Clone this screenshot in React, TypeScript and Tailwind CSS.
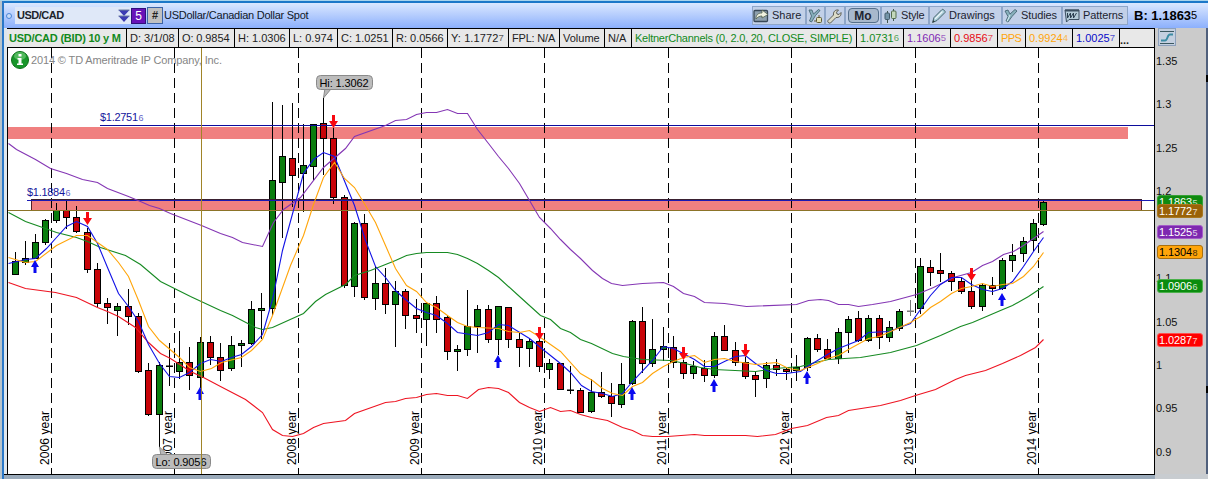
import type { ReactNode } from "react";

type Point = [number, number];
// kind, body top, body bottom, high, low
type Candle = ["g" | "r" | "d" | "n", number, number, number, number];

const candles: Candle[] = [
  ["g", 261, 274, 252, 275], ["g", 258, 262, 241, 265], ["g", 242, 258, 234, 259],
  ["g", 220, 242, 219, 245], ["g", 210, 220, 203, 223], ["r", 210, 217, 200, 229],
  ["r", 217, 231, 206, 233], ["r", 232, 269, 228, 273], ["r", 269, 303, 263, 307],
  ["r", 303, 307, 298, 324], ["g", 306, 310, 303, 336], ["r", 306, 316, 289, 325],
  ["r", 316, 371, 313, 373], ["r", 370, 414, 363, 416], ["g", 365, 414, 362, 447],
  ["d", 366, 366, 343, 386], ["g", 362, 371, 331, 379], ["r", 362, 375, 347, 390],
  ["g", 342, 377, 337, 388], ["r", 342, 357, 336, 365], ["r", 357, 370, 343, 381],
  ["g", 345, 368, 336, 371], ["g", 343, 345, 340, 367], ["g", 309, 343, 301, 345],
  ["g", 308, 310, 293, 339], ["g", 180, 308, 102, 315], ["g", 156, 182, 105, 238],
  ["r", 158, 175, 103, 207], ["g", 165, 173, 124, 212], ["g", 124, 166, 124, 180],
  ["r", 123, 138, 98, 175], ["r", 138, 197, 128, 204], ["r", 197, 285, 195, 288],
  ["g", 223, 286, 222, 297], ["r", 223, 297, 214, 300], ["g", 283, 298, 266, 310],
  ["r", 283, 304, 268, 314], ["g", 291, 304, 281, 347], ["r", 291, 315, 289, 329],
  ["r", 315, 318, 299, 333], ["g", 303, 319, 303, 346], ["r", 303, 319, 296, 333],
  ["r", 317, 351, 315, 360], ["g", 349, 351, 345, 371], ["g", 326, 349, 290, 356],
  ["g", 309, 326, 305, 353], ["r", 309, 339, 305, 343], ["g", 306, 339, 306, 355],
  ["r", 307, 339, 307, 348], ["r", 339, 347, 333, 367], ["g", 341, 348, 338, 367],
  ["r", 341, 366, 339, 372], ["g", 363, 369, 359, 379], ["r", 363, 389, 363, 390],
  ["d", 390, 390, 366, 394], ["r", 390, 412, 388, 413], ["g", 392, 411, 379, 413],
  ["r", 392, 396, 372, 398], ["r", 396, 403, 383, 417], ["g", 384, 404, 363, 408],
  ["g", 321, 383, 320, 385], ["r", 321, 363, 307, 373], ["g", 349, 363, 319, 367],
  ["g", 346, 349, 327, 361], ["r", 347, 362, 336, 368], ["r", 362, 373, 360, 379],
  ["g", 366, 373, 361, 379], ["r", 368, 375, 360, 382], ["g", 336, 375, 332, 378],
  ["r", 336, 350, 325, 351], ["r", 350, 362, 342, 366], ["r", 362, 376, 357, 379],
  ["r", 375, 379, 371, 397], ["g", 365, 378, 362, 388], ["r", 365, 369, 359, 376],
  ["r", 369, 371, 367, 380], ["g", 367, 370, 355, 381], ["g", 338, 367, 337, 371],
  ["r", 338, 349, 334, 352], ["r", 349, 358, 339, 359], ["g", 332, 358, 328, 364],
  ["g", 319, 332, 316, 353], ["r", 318, 340, 311, 342], ["g", 318, 340, 315, 342],
  ["r", 318, 337, 315, 349], ["g", 327, 337, 321, 342], ["g", 311, 328, 309, 331],
  ["n", 311, 311, 300, 316], ["g", 266, 308, 258, 314], ["r", 267, 272, 260, 286],
  ["r", 270, 273, 253, 282], ["r", 273, 281, 271, 291], ["r", 281, 291, 278, 294],
  ["r", 291, 306, 280, 309], ["g", 285, 306, 283, 311], ["r", 285, 288, 277, 295],
  ["g", 260, 288, 258, 290], ["g", 255, 260, 244, 272], ["g", 241, 253, 237, 262],
  ["g", 223, 240, 219, 251], ["g", 202, 224, 200, 226],
];

const upper: Point[] = [
  [8, 143], [16, 149], [35, 159], [50, 168], [66, 173], [82, 179], [97, 182], [107, 188],
  [128, 196], [140, 201], [149, 205], [159, 208], [170, 213], [201, 225], [220, 233],
  [232, 237], [242, 242], [262, 246], [273, 222], [283, 209], [300, 197], [323, 167],
  [345, 148], [354, 136], [385, 125], [395, 120], [406, 119], [416, 114], [426, 112],
  [436, 112], [447, 109], [457, 113], [467, 113], [477, 129], [488, 143], [498, 156],
  [508, 168], [519, 183], [529, 200], [539, 217], [550, 228], [560, 239], [570, 249],
  [580, 258], [592, 270], [602, 278], [611, 283], [622, 285], [642, 283], [663, 282],
  [673, 286], [683, 293], [694, 296], [704, 302], [724, 303], [746, 306], [796, 304],
  [808, 300], [820, 299], [828, 300], [838, 304], [848, 304], [858, 306], [872, 304],
  [890, 301], [916, 294], [933, 287], [953, 277], [971, 272], [982, 265], [992, 261],
  [1003, 254], [1013, 251], [1023, 245], [1043, 231],
];

const middle: Point[] = [
  [8, 212], [25, 221], [45, 228], [56, 232], [76, 237], [87, 241], [100, 247], [125, 255],
  [140, 264], [160, 281], [190, 296], [220, 310], [232, 315], [255, 327], [262, 329],
  [272, 327], [303, 313], [315, 301], [325, 294], [345, 284], [354, 275], [370, 270],
  [385, 264], [395, 260], [406, 255], [416, 253], [426, 252], [447, 252], [457, 254],
  [467, 258], [477, 263], [488, 270], [498, 277], [519, 296], [540, 315], [550, 319],
  [560, 328], [570, 332], [580, 339], [591, 343], [612, 353], [623, 356], [642, 359],
  [670, 360], [685, 363], [700, 367], [714, 369], [755, 371], [775, 368], [800, 366],
  [815, 362], [828, 359], [860, 357], [890, 352], [916, 345], [940, 335], [960, 326],
  [972, 322], [1000, 310], [1012, 305], [1028, 296], [1043, 286],
];

const lower: Point[] = [
  [8, 282], [25, 288], [55, 292], [76, 297], [97, 307], [107, 311], [118, 316], [135, 327],
  [148, 342], [160, 353], [170, 358], [190, 371], [203, 377], [220, 386], [245, 399],
  [262, 412], [272, 429], [282, 435], [292, 436], [303, 433], [313, 427], [323, 423],
  [345, 420], [354, 413], [385, 402], [395, 401], [405, 398], [416, 397], [426, 394],
  [436, 393], [447, 395], [457, 395], [467, 398], [478, 389], [488, 387], [498, 388],
  [508, 392], [519, 402], [529, 407], [539, 411], [550, 407], [560, 411], [570, 410],
  [580, 414], [591, 417], [607, 420], [622, 427], [632, 430], [642, 435], [652, 436],
  [667, 436], [694, 434], [704, 435], [745, 435], [757, 436], [775, 434], [791, 428],
  [807, 425], [826, 417], [838, 415], [848, 410], [880, 405], [900, 400], [915, 395],
  [935, 389], [955, 379], [965, 375], [985, 370], [1002, 363], [1020, 355], [1035, 347],
  [1043, 339],
];

const fast: Point[] = [
  [8, 263], [25, 259], [35, 258], [46, 248], [56, 237], [66, 226], [76, 221], [87, 226],
  [97, 243], [107, 267], [118, 293], [128, 306], [138, 321], [148, 344], [159, 363],
  [169, 376], [179, 377], [189, 372], [200, 363], [210, 359], [221, 361], [231, 357],
  [241, 354], [251, 346], [262, 334], [272, 299], [282, 250], [303, 173], [313, 159],
  [323, 152], [334, 156], [354, 205], [365, 240], [375, 266], [385, 277], [395, 290],
  [405, 299], [416, 308], [426, 312], [436, 315], [447, 323], [457, 332], [477, 335],
  [488, 332], [498, 324], [508, 325], [529, 338], [545, 351], [560, 363], [570, 372],
  [581, 385], [591, 391], [602, 393], [612, 396], [622, 393], [632, 381], [652, 360],
  [663, 346], [673, 348], [694, 359], [704, 366], [714, 366], [724, 361], [735, 356],
  [745, 355], [755, 363], [766, 370], [776, 373], [786, 373], [800, 371], [807, 366],
  [817, 360], [827, 354], [838, 348], [858, 340], [868, 332], [889, 331], [899, 327],
  [910, 323], [920, 309], [930, 295], [940, 284], [951, 277], [961, 277], [971, 284],
  [982, 289], [992, 291], [1002, 288], [1012, 281], [1023, 266], [1033, 251], [1043, 237],
];

const slow: Point[] = [
  [8, 257], [25, 262], [35, 261], [56, 245], [76, 235], [87, 235], [97, 242], [107, 249],
  [118, 262], [128, 276], [138, 300], [148, 326], [159, 340], [179, 357], [189, 367],
  [200, 371], [211, 368], [221, 362], [241, 357], [251, 350], [262, 339], [272, 315],
  [290, 265], [303, 235], [313, 204], [323, 177], [334, 162], [344, 178], [354, 187],
  [365, 205], [375, 222], [385, 245], [395, 268], [406, 285], [416, 291], [426, 302],
  [436, 307], [447, 315], [457, 322], [467, 326], [477, 327], [498, 328], [508, 331],
  [519, 332], [529, 330], [540, 337], [560, 351], [580, 373], [592, 380], [602, 388],
  [612, 393], [622, 395], [632, 386], [642, 382], [652, 373], [663, 366], [673, 361],
  [683, 357], [694, 355], [704, 362], [714, 359], [724, 358], [735, 361], [755, 364],
  [776, 362], [788, 368], [800, 370], [817, 363], [827, 358], [838, 355], [848, 349],
  [868, 338], [879, 336], [899, 327], [910, 322], [920, 316], [930, 307], [940, 301],
  [951, 293], [961, 288], [971, 286], [982, 283], [992, 286], [1002, 284], [1012, 283],
  [1023, 276], [1033, 266], [1043, 252],
];

const lines = [
  { pts: upper, color: "#8436b4" },
  { pts: middle, color: "#168a22" },
  { pts: lower, color: "#ee1422" },
  { pts: fast, color: "#1212e6" },
  { pts: slow, color: "#ffa50a" },
];

const years: [number, string][] = [
  [51, "2006 year"], [174, "2007 year"], [298, "2008 year"], [421, "2009 year"],
  [544, "2010 year"], [668, "2011 year"], [791, "2012 year"], [915, "2013 year"],
  [1038, "2014 year"],
];

const buys: Point[] = [[35, 260], [200, 387], [498, 355], [632, 387], [714, 379], [807, 371], [1002, 293]];
const sells: Point[] = [[87, 225], [333, 128], [539, 340], [683, 360], [745, 357], [971, 281]];

const ticks: [number, string][] = [
  [61, "1.35"], [104, "1.3"], [148, "1.25"], [191, "1.2"], [278, "1.1"],
  [322, "1.05"], [365, "1"], [408, "0.95"], [452, "0.9"],
];

const tags = [
  { y: 202, main: "1.1863", tail: "5", bg: "#0f8a10", edge: "#36a036", fg: "#ffffff" },
  { y: 211, main: "1.1772", tail: "7", bg: "#9a6208", edge: "#a87820", fg: "#ffffff" },
  { y: 232, main: "1.1525", tail: "5", bg: "#7e28b0", edge: "#a45cc8", fg: "#ffffff" },
  { y: 252, main: "1.1304", tail: "8", bg: "#ffa50a", edge: "#a87010", fg: "#000000" },
  { y: 286, main: "1.0906", tail: "6", bg: "#0a8c0e", edge: "#4ab04a", fg: "#ffffff" },
  { y: 340, main: "1.0287", tail: "7", bg: "#ff0000", edge: "#ff5050", fg: "#ffffff" },
];

const bodyFill = { g: "#0a7d0e", r: "#c80308", d: "#000", n: "#777" };

const candleX = (i: number) => Math.floor(15.09 + 10.2865 * i);
const toPoints = (pts: Point[]) => pts.map(([x, y]) => `${x + 0.5},${y + 0.5}`).join(" ");

function CandleShape({ c, i }: { c: Candle; i: number }) {
  const [kind, top, bottom, high, low] = c;
  const x = candleX(i);
  if (kind === "d" || kind === "n") {
    return (
      <g fill={bodyFill[kind]}>
        <rect x={x} y={high} width={1} height={low - high} />
        <rect x={x - 3} y={top - 0.5} width={7} height={1.5} />
      </g>
    );
  }
  return (
    <g>
      <rect x={x} y={high} width={1} height={low - high} fill="#000" />
      <rect
        x={x - 2.5}
        y={top + 0.5}
        width={6}
        height={bottom - top}
        fill={bodyFill[kind]}
        stroke="#000"
      />
    </g>
  );
}

function Callout({ x, y, w, text, tip }: { x: number; y: number; w: number; text: string; tip: string }) {
  return (
    <g>
      <path d={tip} fill="#b9b9b9" stroke="#8a8a8a" />
      <rect x={x + 0.5} y={y + 0.5} width={w} height={14} rx={4} fill="#bcbcbc" stroke="#8a8a8a" />
      <text x={x + 3.5} y={y + 12} fontSize={11} textLength={w - 7} fill="#000">
        {text}
      </text>
    </g>
  );
}

function Chart() {
  return (
    <svg
      viewBox="8 48 1146 426"
      width={1146}
      height={426}
      className="block shrink-0 bg-white"
      fontFamily='"Liberation Sans", Arial, sans-serif'
    >
      {/* resistance zones */}
      <rect x={8} y={127} width={1120} height={12} fill="#f08080" />
      <rect x={31.5} y={200.5} width={1110} height={10} fill="#f08080" stroke="#502028" />

      {years.map(([x, label]) => (
        <g key={label}>
          <line x1={x + 0.5} x2={x + 0.5} y1={48} y2={474} stroke="#000" strokeDasharray="10 5" />
          <text transform={`translate(${x - 2.5} 465) rotate(-90)`} fontSize={12} textLength={54} fill="#000">
            {label}
          </text>
        </g>
      ))}

      {candles.map((c, i) => (
        <CandleShape key={i} c={c} i={i} />
      ))}

      <rect x={100} y={125} width={1054} height={1} fill="#0c0c9c" />
      <rect x={31} y={199} width={1111} height={1} fill="#3a2030" />
      <rect x={27} y={200} width={1127} height={1} fill="#1a1ab4" />
      <rect x={8} y={210} width={1146} height={1} fill="#8c7428" />

      {lines.map((l) => (
        <polyline key={l.color} points={toPoints(l.pts)} fill="none" stroke={l.color} strokeWidth={1.1} />
      ))}

      {buys.map(([x, y]) => (
        <path key={x} d={`M${x} ${y} l4 7 h-2.5 v6 h-3 v-6 h-2.5 z`} fill="#0a0af0" />
      ))}
      {sells.map(([x, y]) => (
        <path key={x} d={`M${x + 0.5} ${y} l4.5 -7 h-3 v-6 h-3 v6 h-3 z`} fill="#f80810" />
      ))}

      <g fontSize={11} fill="#14149c">
        <text x={100} y={121} textLength={38}>$1.2751</text>
        <text x={138.5} y={121} fontSize={9} fill="#6464c8">6</text>
        <text x={27} y={196} textLength={38}>$1.1884</text>
        <text x={65.5} y={196} fontSize={9} fill="#6464c8">6</text>
      </g>

      <Callout x={316} y={75} w={56} text="Hi: 1.3062" tip="M325 88 L323.5 98 L331 89" />
      <Callout x={152} y={454} w={58} text="Lo: 0.9056" tip="M161 456 L159.5 447 L168 455" />

      <rect x={201} y={48} width={1} height={426} fill="#a08428" />

      <g>
        <circle cx={20} cy={60} r={8.5} fill="#18962a" stroke="#0c7018" />
        <ellipse cx={20} cy={56} rx={6} ry={4} fill="#7ad080" opacity={0.6} />
        <path d="M18.5 54h3v2.500h-3z M17.5 58h4v5.500h1.500v1.500h-6v-1.500h1.500v-4h-1z" fill="#fff" />
        <text x={31} y={64} fontSize={11} textLength={191} fill="#858585">
          2014 © TD Ameritrade IP Company, Inc.
        </text>
      </g>
    </svg>
  );
}

function PriceScale() {
  return (
    <svg
      viewBox="1155 48 51 426"
      width={51}
      height={426}
      className="block"
      fontFamily='"Liberation Sans", Arial, sans-serif'
    >
      {ticks.map(([y, label]) => (
        <text key={label} x={1156} y={y + 4} fontSize={11} fill="#111">
          {label}
        </text>
      ))}
      {tags.map((t) => (
        <g key={t.y}>
          <rect x={1157.5} y={t.y - 6.5} width={45} height={13} rx={2.5} fill={t.bg} stroke={t.edge} />
          <text x={1159} y={t.y + 4} fontSize={11} textLength={33} fill={t.fg}>
            {t.main}
          </text>
          <text x={1192.5} y={t.y + 4} fontSize={9} fill={t.fg} opacity={0.75}>
            {t.tail}
          </text>
        </g>
      ))}
    </svg>
  );
}

function Cell({ className, children }: { className: string; children: ReactNode }) {
  return (
    <div
      className={`flex h-full shrink-0 items-center overflow-hidden border-r border-black text-[11px] whitespace-nowrap ${className}`}
    >
      {children}
    </div>
  );
}

function Tail({ children }: { children: ReactNode }) {
  return <span className="text-[9.5px] opacity-70">{children}</span>;
}

function StudyBar() {
  return (
    <div className="flex h-[19px] w-[1147px] border-b border-black bg-[#e8e8e8] text-[#222]">
      <Cell className="w-[120px] pl-[2px] pt-px font-bold tracking-[-0.22px] text-[#128a1c]">USD/CAD (BID) 10 y M</Cell>
      <Cell className="w-[52px] pl-[3px]">D: 3/1/08</Cell>
      <Cell className="w-[56px] pl-[3px] tracking-[-0.1px]">O: 0.9854</Cell>
      <Cell className="w-[55px] pl-[3px]">H: 1.0306</Cell>
      <Cell className="w-[48px] pl-[3px]">L: 0.974</Cell>
      <Cell className="w-[55px] pl-[3px]">C: 1.0251</Cell>
      <Cell className="w-[55px] pl-[3px]">R: 0.0566</Cell>
      <Cell className="w-[61px] pl-[3px] tracking-[0.1px]">Y: 1.1772<Tail>7</Tail></Cell>
      <Cell className="w-[51px] pl-[3px] tracking-[-0.2px]">FPL: N/A</Cell>
      <Cell className="w-[45px] pl-[3px] pt-px">Volume</Cell>
      <Cell className="w-[27px] pl-[3px]">N/A</Cell>
      <Cell className="w-[225px] pl-[3px] pt-px tracking-[-0.24px] text-[#128a1c]">KeltnerChannels (0, 2.0, 20, CLOSE, SIMPLE)</Cell>
      <Cell className="w-[47px] pl-[3px] text-[#128a1c]">1.0731<Tail>6</Tail></Cell>
      <Cell className="w-[47px] pl-[3px] text-[#8028b4]">1.1606<Tail>5</Tail></Cell>
      <Cell className="w-[47px] pl-[3px] text-[#e60a14]">0.9856<Tail>7</Tail></Cell>
      <Cell className="w-[28px] pl-[3px] tracking-[-0.6px] text-[#ffa50a]">PPS</Cell>
      <Cell className="w-[47px] pl-[3px] text-[#ffa50a]">0.9924<Tail>4</Tail></Cell>
      <Cell className="w-[47px] pl-[3px] text-[#0a0ac8]">1.0025<Tail>7</Tail></Cell>
      <div className="flex items-center pt-1 text-[11px] font-bold">...</div>
    </div>
  );
}

function ToolButton({ className, children }: { className: string; children: ReactNode }) {
  return (
    <div
      className={`flex h-[19px] shrink-0 items-center border border-[#8fa6c8] bg-[#c2d0e8] text-[11px] whitespace-nowrap text-[#1c2430] ${className}`}
    >
      {children}
    </div>
  );
}

function ShareIcon() {
  return (
    <svg width="16" height="15" viewBox="0 0 16 15" className="shrink-0">
      <rect x="1" y="2.5" width="13.5" height="11" rx="1" fill="#8ea0ae" stroke="#384858" strokeWidth="1.3" />
      <path d="M3 11c0-4 2-6 6-6V2l6 4.500L9 10V8C6.500 8 4.500 9 3 11z" fill="#f0f2e0" stroke="#50604c" strokeWidth=".8" />
    </svg>
  );
}

function FlaskIcon() {
  return (
    <svg width="16" height="16" viewBox="0 0 16 16" className="shrink-0">
      <path d="M2 3l3-1 2 4 5-4.500 2 1.500-5 5.500-4 5.500-2-1 2-4.500z" fill="#88b0bc" stroke="#3c5c68" strokeWidth=".8" />
      <path d="M7 7l-3 6.500" stroke="#d8f0f4" />
    </svg>
  );
}

function StudyGearIcon() {
  return (
    <svg width="17" height="16" viewBox="0 0 17 16" className="shrink-0">
      <path d="M2 2l3 0 1.500 4 5-4.500 1.500 1-4.500 5-4 6.500-2-1 2-5z" fill="#88b0bc" stroke="#3c5c68" strokeWidth=".8" />
      <rect x="9.500" y="9.500" width="5" height="5" rx="1" fill="#e0e0b8" stroke="#605c34" />
      <path d="M7 13h2M12 7v2" stroke="#605c34" />
    </svg>
  );
}

function WrenchIcon() {
  return (
    <svg width="17" height="16" viewBox="0 0 17 16" className="shrink-0">
      <path
        d="M2 12.500L7.500 7C7 4 9 1.500 12.500 2L10.500 4.200l.5 1.800 2 .5L15 4.500C15.500 8 13 9.800 10 9.500L4.500 15C3 15.500 1 14 2 12.500z"
        fill="#dcdcc8"
        stroke="#5c5c54"
      />
    </svg>
  );
}

function CandlesIcon() {
  return (
    <svg width="15" height="16" viewBox="0 0 15 16" className="shrink-0">
      <path d="M4.500 3v12M10.500 1v12" stroke="#445850" />
      <rect x="2" y="5" width="4.500" height="6.500" rx="1" fill="#7494a8" stroke="#445c6c" />
      <rect x="8.500" y="3" width="4.500" height="7.500" rx="1" fill="#c4d8bc" stroke="#546c4c" />
    </svg>
  );
}

function PencilIcon() {
  return (
    <svg width="16" height="16" viewBox="0 0 16 16" className="shrink-0">
      <path d="M1.500 14.500l1.500-5 8-8c1-.8 4 2 3 3l-8 8z" fill="#a8ccd8" stroke="#48646c" />
      <path d="M4 11l7.500-7.500" stroke="#eef8fa" strokeWidth="1.300" />
      <path d="M1.500 14.500l.8-2.500 1.700 1.700z" fill="#303c40" />
    </svg>
  );
}

function PatternsIcon() {
  return (
    <svg width="17" height="15" viewBox="0 0 17 15" className="shrink-0">
      <path d="M1 2h14v9.500H5L2.500 14z" fill="#b4ccd8" stroke="#3c5060" />
      <path d="M1 2.500h14" stroke="#3c5060" strokeWidth="2" />
      <path d="M3.500 5v5l3-5v5l3-5v5l3-5" fill="none" stroke="#2c4050" />
    </svg>
  );
}

function TitleBar() {
  return (
    <div className="flex h-[25px] items-center bg-linear-to-b from-[#dbe8ff] via-[#b4ccfd] to-[#8cb0fc]">
      <div className="ml-[2px] mr-[3px] size-[6px] rounded-full border border-[#4a86d8] bg-[#c8dcf8]" />
      <div className="flex h-[17px] w-[116px] items-center justify-between bg-[#dfe8f8] pl-[2px] text-[11px] font-bold tracking-[-0.5px] text-[#20242c]">
        USD/CAD
        <svg width="14" height="14" viewBox="0 0 13 14">
          <path d="M1 1h11L6.500 7z M1 7h11L6.500 13z" fill="#3c3cb4" />
          <path d="M1 1h11M1 7h11" stroke="#6c80a0" />
        </svg>
      </div>
      <div className="flex h-[16px] w-[15px] items-center justify-center border border-[#30107c] bg-[#6812b8] text-[12px] text-white">
        5
      </div>
      <div className="ml-[1px] flex h-[17px] w-[16px] items-center justify-center border border-[#3c64a8] bg-[#c0c0c0] text-[11px] font-bold text-[#222]">
        #
      </div>
      <span className="ml-[1px] text-[11px] tracking-[-0.25px] text-[#101828]">USDollar/Canadian Dollar Spot</span>
      <div className="ml-auto flex items-center">
        <ToolButton className="w-[54px] gap-[3px]"><ShareIcon />Share</ToolButton>
        <ToolButton className="w-[19px]"><StudyGearIcon /></ToolButton>
        <ToolButton className="w-[20px]"><WrenchIcon /></ToolButton>
        <ToolButton className="w-[36px] justify-center">
          <span className="flex h-[15px] w-[31px] shrink-0 items-center justify-center rounded-[4px] border border-[#56708c] bg-[#a8b8cc] text-[12px] font-bold">
            Mo
          </span>
        </ToolButton>
        <ToolButton className="w-[48px] gap-[3px] pl-[1px] tracking-[-0.2px]"><CandlesIcon />Style</ToolButton>
        <ToolButton className="w-[73px] gap-[2px] pl-[1px]"><PencilIcon />Drawings</ToolButton>
        <ToolButton className="w-[60px] gap-[2px] tracking-[-0.1px]"><FlaskIcon />Studies</ToolButton>
        <ToolButton className="w-[66px] gap-[2px] pl-[1px] tracking-[-0.1px]"><PatternsIcon />Patterns</ToolButton>
      </div>
      <div className="flex w-[80px] items-center pl-[6px] text-[13px] font-bold whitespace-nowrap text-black">
        B: 1.1863<span className="text-[11px] font-normal">5</span>
      </div>
    </div>
  );
}

export default function App() {
  return (
    <div className="flex h-[479px] w-[1208px] flex-col overflow-hidden bg-[#c8ccd0] font-['Liberation_Sans',Arial,sans-serif] leading-none">
      <div className="h-px shrink-0 bg-[#a8d4ec]" />
      <div className="flex h-[478px]">
        <div className="w-[2px] bg-[#b8c4cc]" />
        <div className="w-[2px] bg-[#2a78c8]" />
        <div className="flex w-[1204px] flex-col border-t-2 border-[#1c78c8]">
          <TitleBar />
          <div className="flex h-[446px]">
            <div className="w-[3px] bg-[#dfe6ec]" />
            <div className="flex w-[1148px] flex-col border-r border-black">
              <div className="h-px bg-black" />
              <StudyBar />
              <div className="flex h-[426px] border-l border-black">
                <Chart />
              </div>
            </div>
            <div className="flex w-[51px] flex-col bg-[#cbcbcb]">
              <div className="flex h-[20px] items-start pl-[3px]">
                <svg width="18" height="18" viewBox="0 0 18 18">
                  <rect x=".5" y=".5" width="17" height="17" fill="#c4d0e0" stroke="#8ca0bc" />
                  <path d="M2 3.500h14M2 15.500h14" stroke="#3c5860" />
                  <path d="M3 12.500h4c3 0 2-6 5-6h3" fill="none" stroke="#3c8ca4" strokeWidth="2" />
                </svg>
              </div>
              <PriceScale />
            </div>
            {/* splitter with its two collapse handles */}
            <div className="flex w-[2px] flex-col bg-[#50607c]">
              <div className="mt-[47px] h-[7px] bg-black" />
              <div className="mt-[304px] h-[7px] bg-black" />
            </div>
          </div>
          <div className="h-px w-[1151px] bg-black" />
          <div className="h-[4px] w-[1151px] bg-[#9aaaba]" />
        </div>
      </div>
    </div>
  );
}
